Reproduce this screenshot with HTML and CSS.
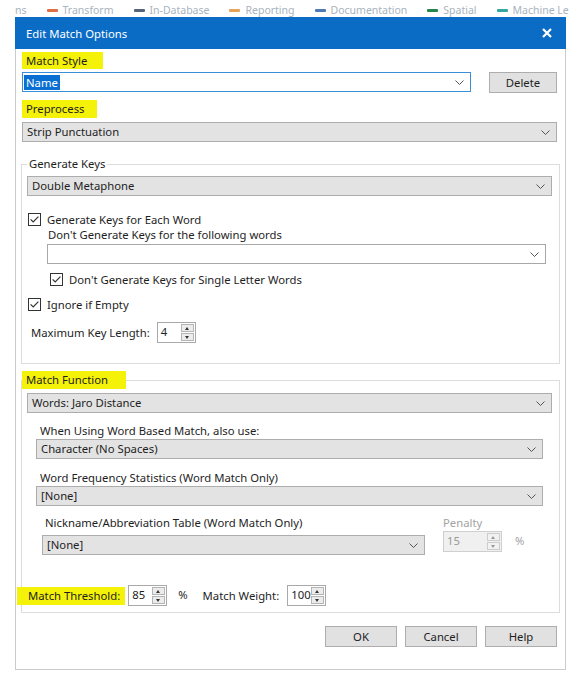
FILE: index.html
```html
<!DOCTYPE html>
<html>
<head>
<meta name="viewport" content="width=device-width, initial-scale=1.0">
<link rel="stylesheet" href="styles.css">
</head>
<body>
  <div class="toolbar">
    <div class="tools">
      <span class="tool first">ns</span>
      <span class="tool"><i class="ic ic-orange"></i>Transform</span>
      <span class="tool"><i class="ic ic-slate"></i>In-Database</span>
      <span class="tool"><i class="ic ic-amber"></i>Reporting</span>
      <span class="tool"><i class="ic ic-blue"></i>Documentation</span>
      <span class="tool"><i class="ic ic-green"></i>Spatial</span>
      <span class="tool"><i class="ic ic-teal"></i>Machine Le</span>
    </div>
  </div>

  <div class="dialog">
    <div class="titlebar">
      <span>Edit Match Options</span>
      <svg class="close" width="10" height="10" viewBox="0 0 10 10"><path d="M1 1 L9 9 M9 1 L1 9" stroke="#fff" stroke-width="2.2"/></svg>
    </div>

    <div class="content">
      <div class="label-row"><span class="hl hl-style">Match Style</span></div>
      <div class="style-row">
        <div class="combo combo-focus"><span class="sel">Name</span><svg class="chev" width="9" height="5" viewBox="0 0 9 5"><path d="M0.5 0.5 L4.5 4.5 L8.5 0.5" fill="none" stroke="#555"/></svg></div>
        <div class="btn btn-delete">Delete</div>
      </div>

      <div class="label-row pre"><span class="hl hl-pre">Preprocess</span></div>
      <div class="combo combo-strip"><span>Strip Punctuation</span><svg class="chev" width="9" height="5" viewBox="0 0 9 5"><path d="M0.5 0.5 L4.5 4.5 L8.5 0.5" fill="none" stroke="#555"/></svg></div>

      <fieldset class="group group-keys">
        <legend>Generate Keys</legend>
        <div class="combo combo-top"><span>Double Metaphone</span><svg class="chev" width="9" height="5" viewBox="0 0 9 5"><path d="M0.5 0.5 L4.5 4.5 L8.5 0.5" fill="none" stroke="#555"/></svg></div>

        <div class="check check-each">
          <svg class="box" width="13" height="13" viewBox="0 0 13 13"><rect x="0.5" y="0.5" width="12" height="12" fill="#fff" stroke="#333"/><path d="M2.6 6.4 L5.2 9 L10.4 3.6" fill="none" stroke="#333" stroke-width="1.2"/></svg>
          <span>Generate Keys for Each Word</span>
        </div>
        <div class="sub-text">Don't Generate Keys for the following words</div>
        <div class="combo combo-white"><span></span><svg class="chev" width="9" height="5" viewBox="0 0 9 5"><path d="M0.5 0.5 L4.5 4.5 L8.5 0.5" fill="none" stroke="#555"/></svg></div>
        <div class="check check-single">
          <svg class="box" width="13" height="13" viewBox="0 0 13 13"><rect x="0.5" y="0.5" width="12" height="12" fill="#fff" stroke="#333"/><path d="M2.6 6.4 L5.2 9 L10.4 3.6" fill="none" stroke="#333" stroke-width="1.2"/></svg>
          <span>Don't Generate Keys for Single Letter Words</span>
        </div>
        <div class="check check-empty">
          <svg class="box" width="13" height="13" viewBox="0 0 13 13"><rect x="0.5" y="0.5" width="12" height="12" fill="#fff" stroke="#333"/><path d="M2.6 6.4 L5.2 9 L10.4 3.6" fill="none" stroke="#333" stroke-width="1.2"/></svg>
          <span>Ignore if Empty</span>
        </div>
        <div class="keylen-row">
          <span class="keylen-label">Maximum Key Length:</span>
          <div class="spin"><span class="spin-val">4</span><span class="spin-btns"><span class="sb up"></span><span class="sb dn"></span></span></div>
        </div>
      </fieldset>

      <fieldset class="group group-match">
        <legend class="hl-legend">Match Function</legend>
        <div class="combo combo-top"><span>Words: Jaro Distance</span><svg class="chev" width="9" height="5" viewBox="0 0 9 5"><path d="M0.5 0.5 L4.5 4.5 L8.5 0.5" fill="none" stroke="#555"/></svg></div>

        <div class="sub-label first">When Using Word Based Match, also use:</div>
        <div class="combo combo-inner"><span>Character (No Spaces)</span><svg class="chev" width="9" height="5" viewBox="0 0 9 5"><path d="M0.5 0.5 L4.5 4.5 L8.5 0.5" fill="none" stroke="#555"/></svg></div>

        <div class="sub-label">Word Frequency Statistics (Word Match Only)</div>
        <div class="combo combo-inner"><span>[None]</span><svg class="chev" width="9" height="5" viewBox="0 0 9 5"><path d="M0.5 0.5 L4.5 4.5 L8.5 0.5" fill="none" stroke="#555"/></svg></div>

        <div class="nick-row">
          <div class="nick-col">
            <div class="nick-label">Nickname/Abbreviation Table (Word Match Only)</div>
            <div class="combo combo-nick"><span>[None]</span><svg class="chev" width="9" height="5" viewBox="0 0 9 5"><path d="M0.5 0.5 L4.5 4.5 L8.5 0.5" fill="none" stroke="#555"/></svg></div>
          </div>
          <div class="pen-col">
            <div class="pen-label">Penalty</div>
            <div class="pen-row">
              <div class="spin spin-off spin-pen"><span class="spin-val">15</span><span class="spin-btns"><span class="sb up"></span><span class="sb dn"></span></span></div>
              <span class="pct pct-off">%</span>
            </div>
          </div>
        </div>

        <div class="thresh-row">
          <span class="hl hl-thresh">Match Threshold:</span>
          <div class="spin spin-thresh"><span class="spin-val">85</span><span class="spin-btns"><span class="sb up"></span><span class="sb dn"></span></span></div>
          <span class="pct">%</span>
          <span class="weight-label">Match Weight:</span>
          <div class="spin"><span class="spin-val">100</span><span class="spin-btns"><span class="sb up"></span><span class="sb dn"></span></span></div>
        </div>
      </fieldset>

      <div class="buttons">
        <div class="btn">OK</div>
        <div class="btn">Cancel</div>
        <div class="btn">Help</div>
      </div>
    </div>
  </div>
</body>
</html>
```

FILE: styles.css
```css
* {box-sizing: border-box;}

body {
  margin: 0;
  width: 582px;
  height: 687px;
  overflow: hidden;
  background: #fff;
  font-family: "Noto Sans", "Open Sans", sans-serif;
  font-size: 11.3px;
  color: #1e1e1e;
}

/* strip of the main app toolbar behind the dialog */
.toolbar {
  height: 17px;
  overflow: hidden;
}

.tools {
  display: flex;
  align-items: center;
  margin-top: 3px;
  padding-left: 15px;
  font-size: 10.5px;
  line-height: 14px;
  color: #a9b3c0;
  white-space: nowrap;
}

.tool {
  display: flex;
  align-items: center;
  margin-left: 20px;
}

.tool.first {
  margin-left: 0;
}

.ic {
  display: inline-block;
  width: 11px;
  height: 3px;
  margin-right: 5px;
  border-radius: 1px;
}

.ic-orange {background: #dd6e45;}
.ic-slate {background: #56647a;}
.ic-amber {background: #e7a35a;}
.ic-blue {background: #4f7bb5;}
.ic-green {background: #22874a;}
.ic-teal {background: #35a7a3;}

/* dialog */
.dialog {
  margin-left: 15px;
  width: 551px;
  border: 1px solid #cbcbcb;
  border-top: 0;
}

.titlebar {
  height: 32px;
  margin: 0 -1px;
  padding: 0 14px 0 11px;
  display: flex;
  align-items: center;
  justify-content: space-between;
  background: #0b6cc6;
  color: #fff;
}

.content {
  padding: 3px 8px 22px 6px;
}

.hl {
  display: inline-block;
  background: #f5f20a;
  padding: 0 4px;
  line-height: 17px;
}

.hl-style {padding-right: 16px;}
.hl-pre {padding-right: 13px;}

.label-row {
  height: 17px;
}

.label-row.pre {
  margin-top: 7px;
  height: 18px;
}

.label-row.pre .hl {
  line-height: 18px;
}

/* combo boxes */
.combo {
  display: flex;
  align-items: center;
  justify-content: space-between;
  height: 20px;
  padding: 0 6px 0 4px;
  border: 1px solid #adadad;
  background: #e3e3e3;
  line-height: 18px;
}

.combo-focus {
  flex: 1;
  background: #fff;
  border-color: #3b8fd9;
  padding-left: 1px;
}

.sel {
  background: #0a6fd2;
  color: #fff;
  padding: 0 2px;
  line-height: 15px;
}

.style-row {
  display: flex;
  gap: 18px;
  margin-top: 3px;
}

.combo-strip {
  margin-top: 4px;
}

.btn {
  width: 72px;
  height: 21px;
  line-height: 19px;
  text-align: center;
  background: #e1e1e1;
  border: 1px solid #adadad;
}

.btn-delete {
  width: 68px;
}

/* group boxes */
.group {
  margin: 14px -3px 0 -1px;
  padding: 0 7px 20px 5px;
  border: 1px solid #dcdcdc;
}

.group legend {
  padding: 0 2px;
  line-height: 16px;
}

.group-match {
  margin-top: 7px;
  padding-bottom: 6px;
}

.group legend.hl-legend {
  margin-left: -5px;
  padding: 0 18px 0 4px;
  line-height: 18px;
  background: #f5f20a;
}

.combo-top {
  margin-top: 4px;
}

.check {
  display: flex;
  align-items: center;
  gap: 6px;
  height: 16px;
  margin-left: 1px;
}

.check-each {margin-top: 15px;}
.check-single {margin-top: 7px; margin-left: 23px;}
.check-empty {margin-top: 9px;}

.sub-text {
  padding-left: 21px;
  line-height: 16px;
}

.combo-white {
  margin: 1px 6px 0 20px;
  background: #fff;
  border-color: #a8a8a8;
}

.keylen-row {
  display: flex;
  align-items: center;
  gap: 7px;
  margin-top: 10px;
  padding-left: 4px;
}

/* spin boxes */
.spin {
  display: flex;
  width: 39px;
  height: 21px;
  padding: 1px;
  border: 1px solid #a9a9a9;
  background: #fff;
}

.spin-val {
  flex: 1;
  padding-left: 2px;
  line-height: 15px;
}

.spin-btns {
  display: flex;
  flex-direction: column;
  gap: 1px;
  width: 13px;
}

.sb {
  flex: 1;
  position: relative;
  border: 1px solid #b4b4b4;
  background: #ececec;
}

.sb::after {
  content: "";
  position: absolute;
  left: 3px;
  border-left: 2.5px solid transparent;
  border-right: 2.5px solid transparent;
}

.sb.up::after {
  top: 2px;
  border-bottom: 3px solid #333;
}

.sb.dn::after {
  top: 2px;
  border-top: 3px solid #333;
}

.spin-off {
  background: #f0f0f0;
  border-color: #cfcfcf;
  color: #9a9a9a;
}

.spin-off .sb {
  border-color: #cdcdcd;
  background: #f2f2f2;
}

.spin-off .sb.up::after {border-bottom-color: #999;}
.spin-off .sb.dn::after {border-top-color: #999;}

.spin-pen {
  width: 59px;
}

/* match function section */
.sub-label {
  margin-top: 11px;
  padding-left: 13px;
  line-height: 16px;
}

.sub-label.first {
  margin-top: 10px;
}

.combo-inner {
  margin: 0 9px;
}

.nick-row {
  display: flex;
  gap: 18px;
  margin-top: 9px;
  margin-left: 15px;
}

.nick-col {
  width: 383px;
}

.nick-label {
  padding-left: 3px;
  line-height: 16px;
}

.combo-nick {
  margin-top: 4px;
}

.pen-label {
  line-height: 16px;
  color: #a3a3a3;
}

.pen-row {
  display: flex;
  align-items: center;
  gap: 13px;
}

.pct {
  margin-left: 11px;
  margin-top: -3px;
}

.pct-off {
  margin-left: 0;
  color: #a3a3a3;
}

.thresh-row {
  display: flex;
  align-items: center;
  margin-top: 30px;
}

.hl-thresh {
  margin-left: -10px;
  padding: 0 5px 0 11px;
  line-height: 18px;
}

.spin-thresh {
  margin-left: 3px;
}

.weight-label {
  margin: 0 8px 0 15px;
}

.buttons {
  display: flex;
  justify-content: flex-end;
  gap: 8px;
  margin-top: 13px;
}
```
